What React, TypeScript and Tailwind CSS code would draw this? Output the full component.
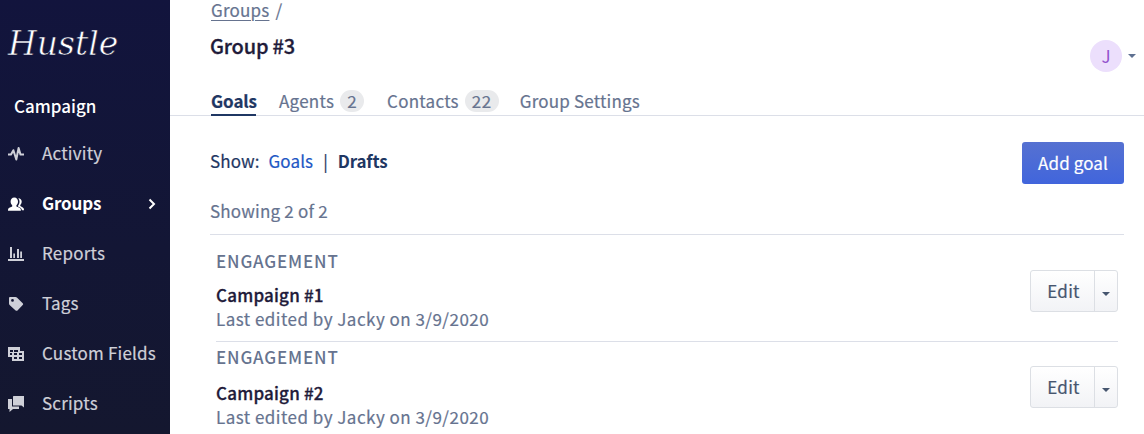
import type { ReactNode } from "react";
import clsx from "clsx";

type NavItem = { label: string; icon: ReactNode; active?: boolean };

const navItems: NavItem[] = [
  {
    label: "Activity",
    icon: (
      <path
        d="M0 8.600h3L5.400 4.200 8.300 13.500l2.300-11.500 1.900 6.600H16"
        fill="none"
        stroke="currentColor"
        strokeWidth="2"
        strokeLinejoin="round"
      />
    ),
  },
  {
    label: "Groups",
    active: true,
    icon: (
      <>
        <path d="M6.300 1.500c2.300 0 3.700 1.700 3.700 4 0 1.700-.7 3-1.600 3.800v1.200l3.200 1.300c1 .4 1.300 1.300 1.300 2.900H0c0-1.600.3-2.500 1.300-2.900l2.900-1.300V9.300C3.300 8.500 2.600 7.200 2.600 5.500c0-2.300 1.400-4 3.700-4z" />
        <path d="M10.300 2.300c2 0 3.400 1.300 3.400 3.300 0 1.600-.6 2.700-1.400 3.400v1l2.500 1.600c.9.600 1.200 1.300 1.200 2.600h-2.100c-.3-1.300-.9-2.200-1.900-2.700l-2-1V9.700c1-1 1.500-2.500 1.500-4.100 0-1.300-.4-2.400-1.200-3.300z" />
      </>
    ),
  },
  {
    label: "Reports",
    icon: <path d="M0 13h16v2H0zM2 1h2v11H2zM5.300 7.500h1.700V12H5.300zM9 3h2v9H9zM12.200 5.500h1.800V12h-1.800z" />,
  },
  {
    label: "Tags",
    icon: (
      <path
        fillRule="evenodd"
        d="M2.200 1h5.300c.6 0 1 .2 1.400.5l5.800 5.800c.6.600.6 1.200 0 1.800l-5.200 5.300c-.6.600-1.300.6-1.900 0L1.600 9C1.200 8.600 1 8.200 1 7.600V2.200C1 1.500 1.500 1 2.200 1zm2.300 2a1.400 1.400 0 1 0 0 2.800 1.400 1.400 0 0 0 0-2.800z"
      />
    ),
  },
  {
    label: "Custom Fields",
    icon: (
      <path
        fillRule="evenodd"
        d="M0 1h12v4h4v10H4v-4H0zm2 3v2h3V4zm4 0v2h4V4zM2 7v2h2V7zm4 0v2h3V7zm5 0v2h3V7zm-5 4v2h3v-2zm5 0v2h3v-2z"
      />
    ),
  },
  {
    label: "Scripts",
    icon: (
      <>
        <path d="M5.500 0H16v11.500L13.500 9.500H5V.5z" />
        <path d="M0 3h4v7.500h7V13H5l-3.500 3v-3H0z" />
      </>
    ),
  },
];

const goals = [
  { name: "Campaign #1", edited: "Last edited by Jacky on 3/9/2020" },
  { name: "Campaign #2", edited: "Last edited by Jacky on 3/9/2020" },
];

function Caret() {
  return (
    <svg className="h-1 w-2" viewBox="0 0 8 4" fill="currentColor">
      <path d="M0 0h8L4 4z" />
    </svg>
  );
}

function Sidebar() {
  return (
    <aside className="flex h-full w-[170px] shrink-0 flex-col bg-linear-to-b from-[#12143d] to-[#14172f]">
      <div className="flex h-[81px] items-center pt-[5px] pl-2">
        <span className="font-['DejaVu_Serif'] text-[33px] leading-none tracking-[0px] text-white italic [-webkit-text-stroke:0.6px_#12143d]">
          Hustle
        </span>
      </div>
      <div className="flex h-12 items-center pt-px pl-3.5 font-medium tracking-[0px] text-white">Campaign</div>
      <nav>
        {navItems.map((item) => (
          <a
            key={item.label}
            className={clsx(
              "flex h-[50px] items-center pr-3.5 pl-2 whitespace-nowrap",
              item.active
                ? "font-bold tracking-[-0.15px] text-white"
                : "tracking-[0.2px] text-[#cfd0d8] [-webkit-text-stroke:0.2px]",
            )}
          >
            <svg className="mr-[18px] size-4 shrink-0" viewBox="0 0 16 16" fill="currentColor">
              {item.icon}
            </svg>
            <span className="-mt-0.5">{item.label}</span>
            {item.active && (
              <svg className="ml-auto h-3 w-2" viewBox="0 0 8 12" fill="none" stroke="currentColor" strokeWidth="2">
                <path d="M1.500 1.500 6 6l-4.500 4.500" />
              </svg>
            )}
          </a>
        ))}
      </nav>
    </aside>
  );
}

function Count({ children }: { children: ReactNode }) {
  return (
    <span className="ml-1.5 flex h-[22px] items-center rounded-full bg-[#e9eaec] px-[7px] tracking-[0.5px]">
      {children}
    </span>
  );
}

function Tabs() {
  return (
    <div className="flex h-[27px] border-b border-[#dcdfe8] pl-[41px] tracking-[0.25px] text-[#66738f] [-webkit-text-stroke:0.2px]">
      <div className="-mb-px h-[27px] w-[45px] border-b-2 border-[#1f3763] font-bold tracking-[-0.1px] text-[#1f3763]">
        Goals
      </div>
      <div className="ml-[23px] flex h-6 items-center">
        Agents<Count>2</Count>
      </div>
      <div className="ml-[23px] flex h-6 items-center">
        Contacts<Count>22</Count>
      </div>
      <div className="ml-[21px] flex h-6 items-center tracking-[0.2px]">Group Settings</div>
    </div>
  );
}

function EditButton() {
  return (
    <div className="mt-[15px] flex h-[42px] w-[88px] rounded-[3px] border border-[#dcdfe4] bg-linear-to-b from-white to-[#f2f3f6] text-[#46566f]">
      <button className="w-[63px] pl-0.5 tracking-[0.3px] [-webkit-text-stroke:0.2px]">Edit</button>
      <button className="flex flex-1 items-center justify-center border-l border-[#dcdfe4] pt-1.5">
        <Caret />
      </button>
    </div>
  );
}

export default function App() {
  return (
    <div className="flex h-[434px] w-[1144px] overflow-hidden bg-white font-['Noto_Sans_CJK_SC',sans-serif] text-[17px] leading-6">
      <Sidebar />
      <main className="min-w-0 flex-1">
        <header className="flex h-[89px] justify-between pr-2 pl-10">
          <div>
            <div className="h-[21px] pl-px leading-[19px] tracking-[0.2px] text-[#66738f] [-webkit-text-stroke:0.2px]">
              <a className="underline decoration-1 underline-offset-[3px]">Groups</a>
              <span className="ml-1.5">/</span>
            </div>
            <h1 className="mt-[13px] text-xl leading-6 font-medium tracking-[-0.2px] text-[#1f1b3a] [-webkit-text-stroke:0.3px]">
              Group #3
            </h1>
          </div>
          <div className="mt-10 flex h-8 items-center gap-1.5 text-[#5f7191]">
            <div className="flex size-8 items-center justify-center rounded-full bg-[#ecdffc] text-[#9250cc]">J</div>
            <Caret />
          </div>
        </header>
        <Tabs />
        <div className="flex h-[70px] items-start justify-between pt-[26px] pr-5 pl-10">
          <div className="flex pt-[7px] tracking-[0.1px] text-[#1f3763] [-webkit-text-stroke:0.2px]">
            <span>Show:</span>
            <a className="ml-[9px] text-[#2257c4]">Goals</a>
            <span className="mx-2.5">|</span>
            <span className="font-bold tracking-[-0.2px] [-webkit-text-stroke:0]">Drafts</span>
          </div>
          <button className="h-[42px] w-[102px] rounded-[3px] bg-linear-to-b from-[#5671d1] to-[#4165dc] tracking-[0.1px] text-white [-webkit-text-stroke:0.2px]">
            Add goal
          </button>
        </div>
        <section className="mr-5 ml-10">
          <p className="h-[49px] border-b border-[#dcdfe8] pt-[13px] tracking-[0.2px] text-[#66738f] [-webkit-text-stroke:0.2px]">
            Showing 2 of 2
          </p>
          <ul className="mx-1.5">
            {goals.map((goal, i) => (
              <li
                key={goal.name}
                className={clsx(
                  "flex justify-between",
                  i === 0 ? "mt-5 h-[87px] border-b border-[#dcdfe8]" : "mt-[9px]",
                )}
              >
                <div className="-mt-1.5">
                  <div className="font-medium tracking-[0.85px] text-[#66738f]">ENGAGEMENT</div>
                  <h2
                    className={clsx(
                      "font-medium tracking-[0.2px] text-[#1f1b3a] [-webkit-text-stroke:0.3px]",
                      i === 0 ? "mt-2.5" : "mt-3",
                    )}
                  >
                    {goal.name}
                  </h2>
                  <p className="tracking-[0.47px] text-[#66738f] [-webkit-text-stroke:0.2px]">{goal.edited}</p>
                </div>
                <EditButton />
              </li>
            ))}
          </ul>
        </section>
      </main>
    </div>
  );
}
